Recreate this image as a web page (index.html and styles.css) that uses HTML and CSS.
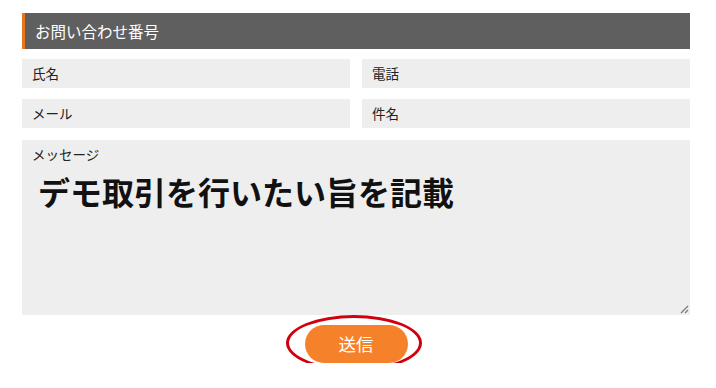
FILE: index.html
```html
<!DOCTYPE html>
<html lang="ja">
<head>
<meta charset="utf-8">
<title>お問い合わせ</title>
<link rel="stylesheet" href="styles.css">
</head>
<body>
<div class="page">
  <div class="heading">お問い合わせ番号</div>
  <div class="fields">
    <div class="field">氏名</div>
    <div class="field">電話</div>
    <div class="field">メール</div>
    <div class="field">件名</div>
  </div>
  <div class="message">
    <div class="message-label">メッセージ</div>
    <div class="message-note">デモ取引を行いたい旨を記載</div>
    <svg class="grip" width="10" height="10" viewBox="0 0 10 10"><path d="M9 2 L2 9 M9 6 L6 9" stroke="#777" stroke-width="1.2" fill="none"/></svg>
  </div>
  <div class="actions">
    <div class="send">送信<span class="circle"></span></div>
  </div>
</div>
</body>
</html>
```
FILE: styles.css
```css
html, body {
  margin: 0;
  padding: 0;
  background: #ffffff;
}
.page {
  padding: 13px 26px 0 22px;
  font-family: "Noto Sans CJK JP", "Noto Sans", sans-serif;
  color: #222;
}
.heading {
  height: 36px;
  line-height: 36px;
  background: #5f5f5f;
  border-left: 3px solid #e8741e;
  padding-left: 10px;
  color: #ffffff;
  font-size: 15.5px;
}
.fields {
  display: grid;
  grid-template-columns: 1fr 1fr;
  column-gap: 12px;
  row-gap: 11px;
  margin-top: 10px;
}
.field {
  height: 29px;
  line-height: 29px;
  background: #eeeeee;
  padding-left: 10px;
  font-size: 13.5px;
}
.message {
  position: relative;
  margin-top: 12px;
  height: 175px;
  background: #eeeeee;
  padding-left: 10px;
  box-sizing: border-box;
  padding-top: 5px;
}
.message-label {
  font-size: 13.5px;
  line-height: 18px;
}
.message-note {
  margin-top: 8px;
  padding-left: 6px;
  font-family: "Noto Sans CJK JP", serif;
  font-weight: 700;
  font-size: 32px;
  line-height: 40px;
  color: #111;
}
.grip {
  position: absolute;
  right: 1px;
  bottom: 1px;
}
.actions {
  display: flex;
  justify-content: center;
  margin-top: 10px;
}
.send {
  position: relative;
  width: 103px;
  height: 38px;
  line-height: 38px;
  border-radius: 19px;
  background: #f5822a;
  color: #ffffff;
  text-align: center;
  font-size: 17.5px;
}
.circle {
  position: absolute;
  left: -19px;
  top: -10px;
  width: 136px;
  height: 56px;
  border: 3px solid #d2000f;
  border-radius: 50%;
  box-sizing: border-box;
}
```
